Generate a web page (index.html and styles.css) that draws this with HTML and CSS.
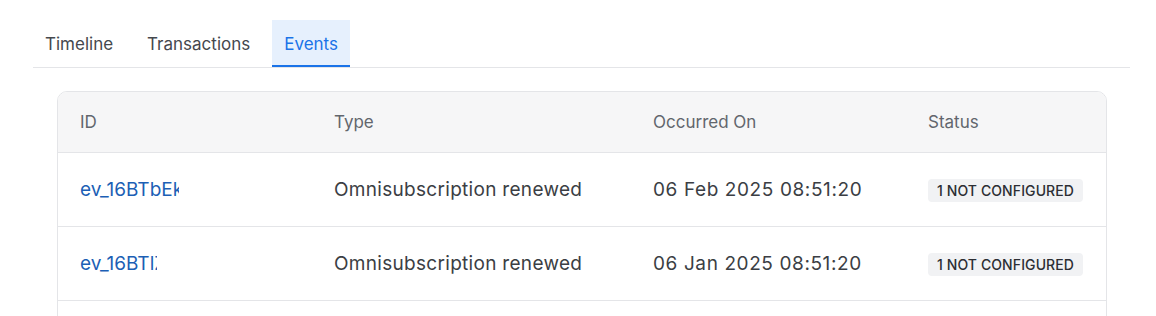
FILE: index.html
```html
<!DOCTYPE html>
<html lang="en">
<head>
    <meta charset="UTF-8">
    <title>Customer Events</title>
    <link rel="stylesheet" href="styles.css">
</head>
<body>

    <main class="page">
        <nav class="tabs">
            <a class="tab">Timeline</a>
            <a class="tab">Transactions</a>
            <a class="tab active">Events</a>
        </nav>

        <section class="card">
            <div class="row head">
                <div class="col">ID</div>
                <div class="col">Type</div>
                <div class="col">Occurred On</div>
                <div class="col">Status</div>
            </div>
            <div class="row">
                <div class="col"><a class="event-id clip-long">ev_16BTbEkUQ3vJp2A</a></div>
                <div class="col type">Omnisubscription renewed</div>
                <div class="col date">06 Feb 2025 08:51:20</div>
                <div class="col"><span class="badge">1 Not configured</span></div>
            </div>
            <div class="row">
                <div class="col"><a class="event-id clip-short">ev_16BTlZkUQ3uNx9C</a></div>
                <div class="col type">Omnisubscription renewed</div>
                <div class="col date">06 Jan 2025 08:51:20</div>
                <div class="col"><span class="badge">1 Not configured</span></div>
            </div>
            <div class="row">
                <div class="col"></div>
                <div class="col"></div>
                <div class="col"></div>
                <div class="col"></div>
            </div>
        </section>
    </main>

</body>
</html>
```

FILE: styles.css
```css
:root {
    --text: #3b3e44;
    --muted: #62666d;
    --line: #e4e5e8;
    --head-bg: #f6f6f7;
    --blue: #1a73e8;
    --link: #1c5fb5;
    --font-main: 'Inter', 'Noto Sans', sans-serif;
}

html, body {
    margin: 0;
    background: #ffffff;
    font-family: var(--font-main);
    color: var(--text);
}

.page {
    width: 1097px;
    margin-left: 33px;
    padding-top: 20px;
}

.tabs {
    display: flex;
    gap: 10px;
    border-bottom: 1px solid var(--line);
}

.tab {
    padding: 2px 12px 0;
    height: 47px;
    display: flex;
    align-items: center;
    box-sizing: border-box;
    font-size: 17px;
    color: #45484e;
    border-bottom: 2px solid transparent;
    cursor: pointer;
}

.tab.active {
    background: #e6f0fd;
    color: var(--blue);
    border-bottom-color: var(--blue);
}

.card {
    margin: 23px 23px 0 24px;
    border: 1px solid var(--line);
    border-radius: 10px;
    overflow: hidden;
}

.row {
    display: grid;
    grid-template-columns: 254px 319px 275px 1fr;
    height: 73px;
    align-items: center;
    border-top: 1px solid var(--line);
    font-size: 19px;
}

.row.head {
    height: 60px;
    border-top: none;
    background: var(--head-bg);
    font-size: 17px;
    color: var(--muted);
}

.col {
    padding-left: 22px;
    white-space: nowrap;
}

.type { letter-spacing: 0.3px; }
.date { letter-spacing: 0.6px; }

.event-id {
    display: inline-block;
    overflow: hidden;
    vertical-align: bottom;
    color: var(--link);
    cursor: pointer;
}

.clip-long { width: 99px; }
.clip-short { width: 77px; }

.badge {
    display: inline-block;
    padding: 3px 9px;
    border-radius: 4px;
    background: #f1f2f4;
    color: #2c2e33;
    font-size: 14px;
    font-weight: 500;
    text-transform: uppercase;
    letter-spacing: 0.1px;
}
```
